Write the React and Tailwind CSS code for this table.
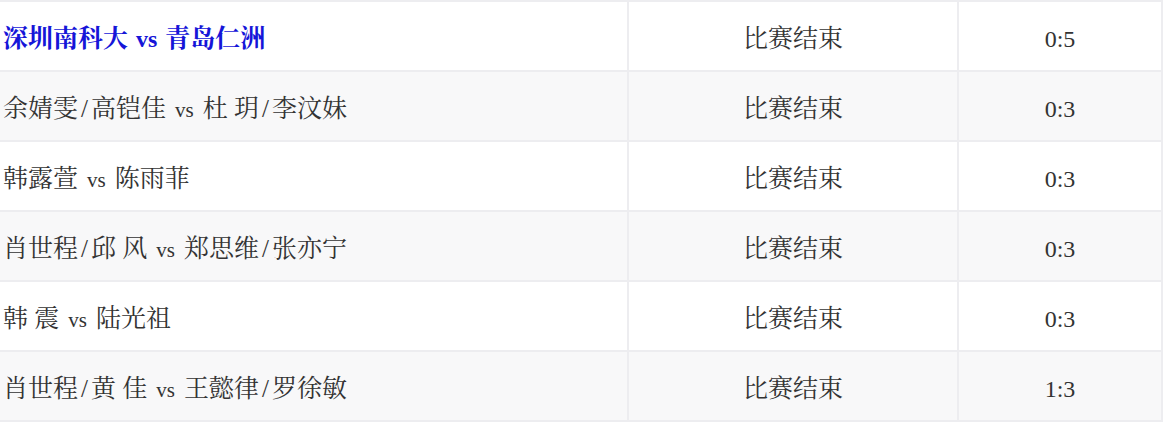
import React from "react";

const rows = [
  { a: "深圳南科大", b: "青岛仁洲", status: "比赛结束", score: "0:5", head: true },
  { a: "余婧雯/高铠佳", b: "杜 玥/李汶妹", status: "比赛结束", score: "0:3" },
  { a: "韩露萱", b: "陈雨菲", status: "比赛结束", score: "0:3" },
  { a: "肖世程/邱 风", b: "郑思维/张亦宁", status: "比赛结束", score: "0:3" },
  { a: "韩 震", b: "陆光祖", status: "比赛结束", score: "0:3" },
  { a: "肖世程/黄 佳", b: "王懿律/罗徐敏", status: "比赛结束", score: "1:3" },
];

function Side({ text }) {
  const parts = text.split("/");
  return (
    <>
      {parts.map((p, i) => (
        <React.Fragment key={i}>
          {i > 0 && <span className="px-[3px]">/</span>}
          {p}
        </React.Fragment>
      ))}
    </>
  );
}

export default function App() {
  return (
    <div
      className="w-[1164px] h-[424px] bg-white overflow-hidden text-[#333333]"
      style={{ fontFamily: '"Liberation Serif", "Noto Serif CJK SC", "Noto Sans CJK SC", serif' }}
    >
      <div className="w-[1163px] border-t-2 border-[#ededf0]">
        {rows.map((r, i) => (
          <div
            key={i}
            className={`flex h-[70px] border-b-2 border-[#ededf0] ${i % 2 === 1 ? "bg-[#f8f8f9]" : "bg-white"}`}
          >
            <div
              className={`w-[629px] shrink-0 border-r-2 border-[#ededf0] flex items-center pt-[5px] pl-[3px] text-[25px] ${
                r.head ? "font-bold text-[#1515d8]" : ""
              }`}
            >
              <span className="whitespace-pre">
                <Side text={r.a} />
                {r.head ? (
                  <span className="text-[24px] px-[8px]">vs</span>
                ) : (
                  <span className="text-[21px] px-[9px]">vs</span>
                )}
                <Side text={r.b} />
              </span>
            </div>
            <div className="w-[330px] shrink-0 border-r-2 border-[#ededf0] flex items-center justify-center pt-[5px] text-[25px]">
              {r.status}
            </div>
            <div className="w-[204px] shrink-0 border-r-2 border-[#ededf0] flex items-center justify-center pt-[5px] text-[24px]">
              {r.score}
            </div>
          </div>
        ))}
      </div>
    </div>
  );
}
